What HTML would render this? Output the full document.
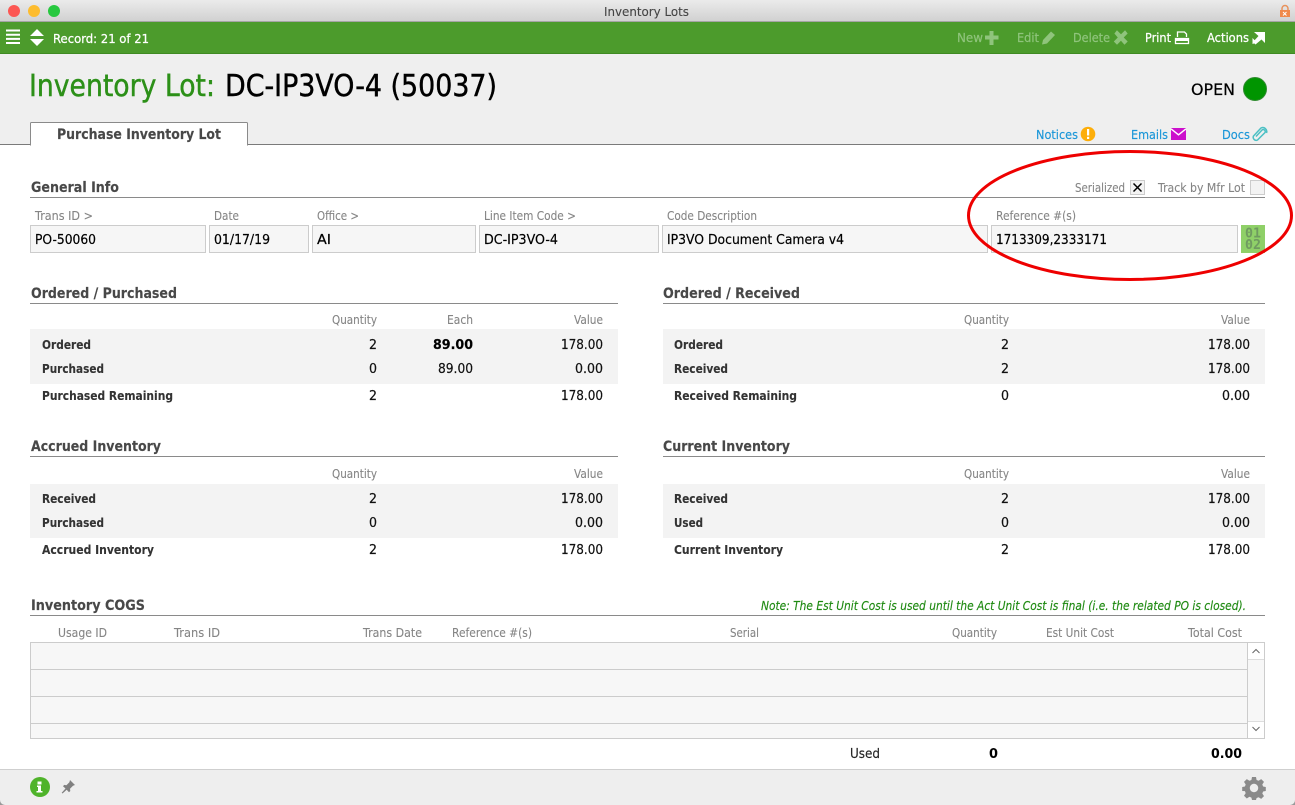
<!DOCTYPE html>
<html><head><meta charset="utf-8"><title>Inventory Lots</title>
<style>
html,body{margin:0;padding:0;background:#fff;width:1295px;height:805px;overflow:hidden}
svg{display:block}
text{font-family:"DejaVu Sans","Liberation Sans",sans-serif;font-size:12.5px;fill:#222;white-space:pre}
.h{font-weight:700;font-size:14px;fill:#484848;stroke:#484848;stroke-width:.15}
.l{fill:#858585;font-size:12px;stroke:#858585;stroke-width:.1}
.b{font-weight:700;font-size:12px;fill:#333;stroke:#333;stroke-width:.1}
.v{font-size:13.5px;fill:#111;stroke:#111;stroke-width:.2}
.i{font-size:13px;fill:#000;stroke:#000;stroke-width:.2}
.w{fill:#fff;font-size:12px;stroke:#fff;stroke-width:.25}
.d{fill:#8fc47c;font-size:12px;stroke:#8fc47c;stroke-width:.2}
.a{fill:#1a96d8;font-size:12.5px;stroke:#1a96d8;stroke-width:.15}
.t{font-size:30px;stroke-width:.45}
</style></head><body>
<svg xmlns="http://www.w3.org/2000/svg" width="1295" height="805" viewBox="0 0 1295 805">
<defs><linearGradient id="tb" x1="0" y1="0" x2="0" y2="1"><stop offset="0" stop-color="#ebebeb"/><stop offset="1" stop-color="#d0d0d0"/></linearGradient></defs>
<rect width="1295" height="805" fill="#fff"/>
<rect width="1295" height="22" fill="url(#tb)"/>
<rect y="21" width="1295" height="1" fill="#a5a5a5"/>
<circle cx="14" cy="11" r="6" fill="#fc5753"/><circle cx="34" cy="11" r="6" fill="#fdbc2e"/><circle cx="54" cy="11" r="6" fill="#27c83f"/>
<text x="604" y="16" textLength="85" lengthAdjust="spacingAndGlyphs" style="fill:#444;font-size:12px;stroke:#444;stroke-width:.1">Inventory Lots</text>
<path d="M1282 10V8.500a3 3 0 0 1 6 0V10" fill="none" stroke="#e8925c" stroke-width="1.500"/><rect x="1280" y="10" width="10" height="7" fill="#f0894a"/><path d="M1283 12l3.500 3.500M1286.500 12L1283 15.500" stroke="#fff" stroke-width="1"/>

<rect y="22" width="1295" height="31" fill="#4c9b2c"/><rect y="53" width="1295" height="1" fill="#3f8a23"/>
<path d="M6 30.500h14M6 34.700h14M6 38.900h14M6 43h14" stroke="#fff" stroke-width="2"/>
<path d="M37 29l7 7H30zM37 46l-7-7h14z" fill="#fff"/>
<text class="w" x="53" y="43" textLength="96" lengthAdjust="spacingAndGlyphs">Record: 21 of 21</text>

<text class="d" x="957" y="42" textLength="26" lengthAdjust="spacingAndGlyphs">New</text>
<path d="M985 35.500h4.500V31h4v4.500h5v4h-5V45h-4v-5.500H985z" fill="#8fc47c"/>
<text class="d" x="1017" y="42" textLength="22" lengthAdjust="spacingAndGlyphs">Edit</text>
<path d="M1042 44.500l1-4.500 8-8.500 4 3.500-8 8.500z" fill="#8fc47c"/>
<text class="d" x="1073" y="42" textLength="37" lengthAdjust="spacingAndGlyphs">Delete</text>
<path d="M1115 33.500l2-2.500 4 4 4-4 2 2.500-4 4 4 4-2.500 2.500-3.500-4-4 4-2.500-2.500 4-4z" fill="#8fc47c" stroke="#8fc47c"/>
<text class="w" x="1145" y="42" textLength="26" lengthAdjust="spacingAndGlyphs">Print</text>
<path d="M1177.500 37v-5h7l2 2V37M1175.500 38.500h13v5h-13z" fill="none" stroke="#fff" stroke-width="1.300"/><rect x="1175" y="38" width="14" height="3" fill="#fff"/>
<text class="w" x="1207" y="42" textLength="42" lengthAdjust="spacingAndGlyphs">Actions</text>
<path d="M1254 32h11v11l-3.500-3.500-6 5-2.500-2.500 5.500-6zM1252.500 38l4.500 4.500-4.500 1.500z" fill="#fff"/>

<rect y="54" width="1295" height="91" fill="#efefef"/>
<text class="t" x="29" y="96" textLength="186" lengthAdjust="spacingAndGlyphs" style="fill:#2c9018;stroke:#2c9018">Inventory Lot:</text>
<text class="t" x="225" y="96" textLength="272" lengthAdjust="spacingAndGlyphs" style="fill:#000;stroke:#000">DC-IP3VO-4 (50037)</text>
<text x="1191" y="95" textLength="44" lengthAdjust="spacingAndGlyphs" style="font-size:16px;fill:#000;stroke:#000;stroke-width:.2">OPEN</text>
<circle cx="1255" cy="89" r="11.500" fill="#009500" stroke="#2f8a2f" stroke-width="1"/>

<rect y="144" width="1295" height="1" fill="#7a7a7a"/>
<path d="M30.500 145v-21.500a1 1 0 0 1 1-1h215a1 1 0 0 1 1 1V145z" fill="#fff" stroke="#8a8a8a"/>
<rect x="31" y="144" width="216" height="2" fill="#fff"/>
<text class="h" x="57" y="139" textLength="164" lengthAdjust="spacingAndGlyphs">Purchase Inventory Lot</text>

<text class="a" x="1036" y="139" textLength="42" lengthAdjust="spacingAndGlyphs">Notices</text>
<circle cx="1088" cy="134" r="7.300" fill="#fdae0a"/><rect x="1087" y="129" width="2.200" height="6.500" fill="#fff"/><rect x="1087" y="136.800" width="2.200" height="2.200" fill="#fff"/>
<text class="a" x="1131" y="139" textLength="37" lengthAdjust="spacingAndGlyphs">Emails</text>
<rect x="1171" y="128" width="15" height="12" fill="#cc10cc"/><path d="M1171 128.800l7.500 6 7.500-6" fill="none" stroke="#fff" stroke-width="1.400"/>
<text class="a" x="1222" y="139" textLength="28" lengthAdjust="spacingAndGlyphs">Docs</text>
<path d="M1256 136.500l6-6.500a2 2 0 0 1 3 2.500l-7.500 7.500a3 3 0 0 1-4-4l7.500-8a4 4 0 0 1 5.500 5" fill="none" stroke="#4cc0c4" stroke-width="1.500"/>

<text class="h" x="31" y="192" textLength="88" lengthAdjust="spacingAndGlyphs">General Info</text>
<rect x="30" y="197" width="1235" height="1" fill="#8a8a8a"/>
<text class="l" x="1075" y="192" textLength="50" lengthAdjust="spacingAndGlyphs">Serialized</text>
<rect x="1130.500" y="180.500" width="14" height="14" fill="#f3f3f3" stroke="#ccc"/>
<path d="M1133.500 183.500l8 8M1141.500 183.500l-8 8" stroke="#000" stroke-width="1.500"/>
<text class="l" x="1158" y="192" textLength="87" lengthAdjust="spacingAndGlyphs">Track by Mfr Lot</text>
<rect x="1250.500" y="180.500" width="14" height="14" fill="#f3f3f3" stroke="#ccc"/>

<text class="l" x="35" y="220" textLength="58" lengthAdjust="spacingAndGlyphs">Trans ID &gt;</text>
<text class="l" x="214" y="220" textLength="25" lengthAdjust="spacingAndGlyphs">Date</text>
<text class="l" x="317" y="220" textLength="42" lengthAdjust="spacingAndGlyphs">Office &gt;</text>
<text class="l" x="484" y="220" textLength="92" lengthAdjust="spacingAndGlyphs">Line Item Code &gt;</text>
<text class="l" x="667" y="220" textLength="90" lengthAdjust="spacingAndGlyphs">Code Description</text>
<text class="l" x="996" y="220" textLength="80" lengthAdjust="spacingAndGlyphs">Reference #(s)</text>
<g fill="#f6f6f6" stroke="#ccc">
<rect x="30.500" y="225.500" width="175" height="27"/><rect x="209.500" y="225.500" width="99" height="27"/><rect x="312.500" y="225.500" width="163" height="27"/><rect x="479.500" y="225.500" width="179" height="27"/><rect x="662.500" y="225.500" width="325" height="27"/><rect x="991.500" y="225.500" width="246" height="27"/>
</g>
<text class="i" x="35" y="244" textLength="61" lengthAdjust="spacingAndGlyphs">PO-50060</text>
<text class="i" x="214" y="244" textLength="56" lengthAdjust="spacingAndGlyphs">01/17/19</text>
<text class="i" x="317" y="244" textLength="14" lengthAdjust="spacingAndGlyphs">AI</text>
<text class="i" x="484" y="244" textLength="74" lengthAdjust="spacingAndGlyphs">DC-IP3VO-4</text>
<text class="i" x="667" y="244" textLength="177" lengthAdjust="spacingAndGlyphs">IP3VO Document Camera v4</text>
<text class="i" x="996" y="244" textLength="111" lengthAdjust="spacingAndGlyphs">1713309,2333171</text>
<rect x="1241" y="225" width="24" height="28" fill="#8fd068"/>
<text x="1245" y="237.500" textLength="16" lengthAdjust="spacingAndGlyphs" style="font-family:'DejaVu Sans Mono','Liberation Mono',monospace;font-size:13px;font-weight:700;fill:#6f9a60">01</text>
<text x="1245" y="249" textLength="16" lengthAdjust="spacingAndGlyphs" style="font-family:'DejaVu Sans Mono','Liberation Mono',monospace;font-size:13px;font-weight:700;fill:#6f9a60">02</text>

<!-- Ordered / Purchased -->
<text class="h" x="31" y="298" textLength="146" lengthAdjust="spacingAndGlyphs">Ordered / Purchased</text>
<rect x="30" y="303" width="588" height="1" fill="#8a8a8a"/>
<text class="l" x="332" y="324" textLength="45" lengthAdjust="spacingAndGlyphs">Quantity</text>
<text class="l" x="447" y="324" textLength="26" lengthAdjust="spacingAndGlyphs">Each</text>
<text class="l" x="574" y="324" textLength="29" lengthAdjust="spacingAndGlyphs">Value</text>
<rect x="30" y="329" width="588" height="55" fill="#f3f3f3"/>
<text class="b" x="42" y="349" textLength="49" lengthAdjust="spacingAndGlyphs">Ordered</text>
<text class="b" x="42" y="373" textLength="62" lengthAdjust="spacingAndGlyphs">Purchased</text>
<text class="b" x="42" y="400" textLength="131" lengthAdjust="spacingAndGlyphs">Purchased Remaining</text>
<text class="v" x="369" y="349" textLength="8" lengthAdjust="spacingAndGlyphs">2</text>
<text class="v" x="369" y="373" textLength="8" lengthAdjust="spacingAndGlyphs">0</text>
<text class="v" x="369" y="400" textLength="8" lengthAdjust="spacingAndGlyphs">2</text>
<text class="v" x="433" y="349" textLength="40" lengthAdjust="spacingAndGlyphs" style="font-weight:700;fill:#000">89.00</text>
<text class="v" x="438" y="373" textLength="35" lengthAdjust="spacingAndGlyphs">89.00</text>
<text class="v" x="561" y="349" textLength="42" lengthAdjust="spacingAndGlyphs">178.00</text>
<text class="v" x="575" y="373" textLength="28" lengthAdjust="spacingAndGlyphs">0.00</text>
<text class="v" x="561" y="400" textLength="42" lengthAdjust="spacingAndGlyphs">178.00</text>

<!-- Ordered / Received -->
<text class="h" x="663" y="298" textLength="137" lengthAdjust="spacingAndGlyphs">Ordered / Received</text>
<rect x="663" y="303" width="602" height="1" fill="#8a8a8a"/>
<text class="l" x="964" y="324" textLength="45" lengthAdjust="spacingAndGlyphs">Quantity</text>
<text class="l" x="1221" y="324" textLength="29" lengthAdjust="spacingAndGlyphs">Value</text>
<rect x="663" y="329" width="602" height="55" fill="#f3f3f3"/>
<text class="b" x="674" y="349" textLength="49" lengthAdjust="spacingAndGlyphs">Ordered</text>
<text class="b" x="674" y="373" textLength="54" lengthAdjust="spacingAndGlyphs">Received</text>
<text class="b" x="674" y="400" textLength="123" lengthAdjust="spacingAndGlyphs">Received Remaining</text>
<text class="v" x="1001" y="349" textLength="8" lengthAdjust="spacingAndGlyphs">2</text>
<text class="v" x="1001" y="373" textLength="8" lengthAdjust="spacingAndGlyphs">2</text>
<text class="v" x="1001" y="400" textLength="8" lengthAdjust="spacingAndGlyphs">0</text>
<text class="v" x="1208" y="349" textLength="42" lengthAdjust="spacingAndGlyphs">178.00</text>
<text class="v" x="1208" y="373" textLength="42" lengthAdjust="spacingAndGlyphs">178.00</text>
<text class="v" x="1222" y="400" textLength="28" lengthAdjust="spacingAndGlyphs">0.00</text>

<!-- Accrued -->
<text class="h" x="31" y="451" textLength="130" lengthAdjust="spacingAndGlyphs">Accrued Inventory</text>
<rect x="30" y="456" width="588" height="1" fill="#8a8a8a"/>
<text class="l" x="332" y="478" textLength="45" lengthAdjust="spacingAndGlyphs">Quantity</text>
<text class="l" x="574" y="478" textLength="29" lengthAdjust="spacingAndGlyphs">Value</text>
<rect x="30" y="484" width="588" height="54" fill="#f3f3f3"/>
<text class="b" x="42" y="503" textLength="54" lengthAdjust="spacingAndGlyphs">Received</text>
<text class="b" x="42" y="527" textLength="62" lengthAdjust="spacingAndGlyphs">Purchased</text>
<text class="b" x="42" y="554" textLength="112" lengthAdjust="spacingAndGlyphs">Accrued Inventory</text>
<text class="v" x="369" y="503" textLength="8" lengthAdjust="spacingAndGlyphs">2</text>
<text class="v" x="369" y="527" textLength="8" lengthAdjust="spacingAndGlyphs">0</text>
<text class="v" x="369" y="554" textLength="8" lengthAdjust="spacingAndGlyphs">2</text>
<text class="v" x="561" y="503" textLength="42" lengthAdjust="spacingAndGlyphs">178.00</text>
<text class="v" x="575" y="527" textLength="28" lengthAdjust="spacingAndGlyphs">0.00</text>
<text class="v" x="561" y="554" textLength="42" lengthAdjust="spacingAndGlyphs">178.00</text>

<!-- Current -->
<text class="h" x="663" y="451" textLength="127" lengthAdjust="spacingAndGlyphs">Current Inventory</text>
<rect x="663" y="456" width="602" height="1" fill="#8a8a8a"/>
<text class="l" x="964" y="478" textLength="45" lengthAdjust="spacingAndGlyphs">Quantity</text>
<text class="l" x="1221" y="478" textLength="29" lengthAdjust="spacingAndGlyphs">Value</text>
<rect x="663" y="484" width="602" height="54" fill="#f3f3f3"/>
<text class="b" x="674" y="503" textLength="54" lengthAdjust="spacingAndGlyphs">Received</text>
<text class="b" x="674" y="527" textLength="29" lengthAdjust="spacingAndGlyphs">Used</text>
<text class="b" x="674" y="554" textLength="109" lengthAdjust="spacingAndGlyphs">Current Inventory</text>
<text class="v" x="1001" y="503" textLength="8" lengthAdjust="spacingAndGlyphs">2</text>
<text class="v" x="1001" y="527" textLength="8" lengthAdjust="spacingAndGlyphs">0</text>
<text class="v" x="1001" y="554" textLength="8" lengthAdjust="spacingAndGlyphs">2</text>
<text class="v" x="1208" y="503" textLength="42" lengthAdjust="spacingAndGlyphs">178.00</text>
<text class="v" x="1222" y="527" textLength="28" lengthAdjust="spacingAndGlyphs">0.00</text>
<text class="v" x="1208" y="554" textLength="42" lengthAdjust="spacingAndGlyphs">178.00</text>

<!-- COGS -->
<text class="h" x="31" y="610" textLength="114" lengthAdjust="spacingAndGlyphs">Inventory COGS</text>
<rect x="30" y="615" width="1235" height="1" fill="#8a8a8a"/>
<text x="761" y="610" textLength="485" lengthAdjust="spacingAndGlyphs" style="font-style:italic;font-size:12px;fill:#1f8a12;stroke:#1f8a12;stroke-width:.15">Note: The Est Unit Cost is used until the Act Unit Cost is final (i.e. the related PO is closed).</text>
<text class="l" x="58" y="637" textLength="49" lengthAdjust="spacingAndGlyphs">Usage ID</text>
<text class="l" x="174" y="637" textLength="46" lengthAdjust="spacingAndGlyphs">Trans ID</text>
<text class="l" x="363" y="637" textLength="59" lengthAdjust="spacingAndGlyphs">Trans Date</text>
<text class="l" x="452" y="637" textLength="80" lengthAdjust="spacingAndGlyphs">Reference #(s)</text>
<text class="l" x="730" y="637" textLength="29" lengthAdjust="spacingAndGlyphs">Serial</text>
<text class="l" x="952" y="637" textLength="45" lengthAdjust="spacingAndGlyphs">Quantity</text>
<text class="l" x="1046" y="637" textLength="68" lengthAdjust="spacingAndGlyphs">Est Unit Cost</text>
<text class="l" x="1188" y="637" textLength="54" lengthAdjust="spacingAndGlyphs">Total Cost</text>

<rect x="30.500" y="642.500" width="1234" height="96" fill="#f7f7f7" stroke="#ccc"/>
<path d="M31 669.500h1216M31 696.500h1216M31 723.500h1216" stroke="#ccc"/>
<path d="M1247.500 643v95" stroke="#ccc"/>
<rect x="1248" y="643" width="16" height="16" fill="#fff"/><rect x="1248" y="722" width="16" height="16" fill="#fff"/>
<path d="M1248 659.500h16M1248 721.500h16" stroke="#ddd"/>
<path d="M1252.500 653l3.500-3.500 3.500 3.500M1252.500 727l3.500 3.500 3.500-3.500" fill="none" stroke="#666" stroke-width="1"/>

<text x="850" y="758" textLength="30" lengthAdjust="spacingAndGlyphs" style="font-size:13px;stroke:#222;stroke-width:.15">Used</text>
<text x="989" y="758" textLength="9" lengthAdjust="spacingAndGlyphs" style="font-weight:700;font-size:13.5px;fill:#000">0</text>
<text x="1211" y="758" textLength="31" lengthAdjust="spacingAndGlyphs" style="font-weight:700;font-size:13.5px;fill:#000">0.00</text>

<!-- footer -->
<rect y="769" width="1295" height="36" fill="#eeeeee"/><rect y="769" width="1295" height="1" fill="#cfcfcf"/>
<path d="M0 800v5h5a5 5 0 0 1-5-5zM1295 800v5h-5a5 5 0 0 0 5-5z" fill="#999"/>
<circle cx="40" cy="787" r="10" fill="#4fb32a"/>
<path d="M37.500 781.500h4v3h-4zM37 785.500h4v5.500h1.500v1.500h-6V791H38v-4h-1z" fill="#fff"/>
<path d="M70 780l5 5-2 .8-3 3 .3 2.200-1.300 1.200-2.300-2.500-4.200 3.800-.8-.8 3.800-4.200-2.500-2.300 1.200-1.300 2.200.3 3-3z" fill="#808080"/>
<g transform="translate(1254 788)" fill="#8a8a8a">
<path fill-rule="evenodd" d="M-2-11h4l.6 3 2 .8 2.600-1.700 2.800 2.800L8.300-3.500l.8 2L11.800-1v4l-2.700.5-.8 2 1.700 2.600-2.800 2.800-2.600-1.700-2 .8L2 12h-4l-.6-2.400-2-.8-2.600 1.700-2.800-2.800 1.700-2.600-.8-2L-11.800 3v-4l2.700-.5.8-2-1.700-2.600 2.800-2.800 2.600 1.700 2-.8zM0-4.200a4.200 4.200 0 1 0 .01 0z"/>
</g>

<ellipse cx="1130" cy="215.500" rx="161.500" ry="64" fill="none" stroke="#ee0000" stroke-width="3"/>
</svg>
</body></html>
